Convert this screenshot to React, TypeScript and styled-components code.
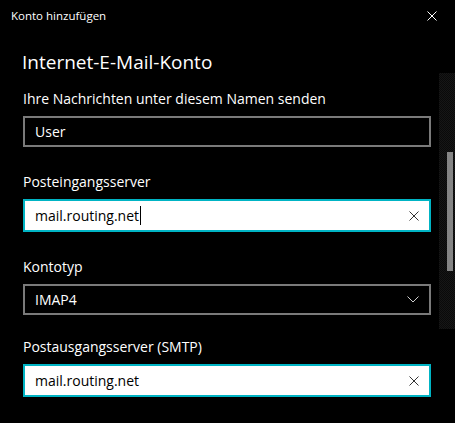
import React from "react";
import styled, { createGlobalStyle } from "styled-components";

const GlobalStyle = createGlobalStyle`
  html, body {
    margin: 0;
    padding: 0;
    background: #000;
  }
  body {
    font-family: "Segoe UI", "Open Sans", "Noto Sans", sans-serif;
    color: #fff;
  }
`;

const Window = styled.div`
  width: 455px;
  height: 423px;
  background: #000;
  display: flex;
  flex-direction: column;
  overflow: hidden;
`;

const TitleBar = styled.div`
  height: 31px;
  display: flex;
  align-items: center;
  justify-content: space-between;
  padding-left: 11px;
  flex-shrink: 0;
`;

const TitleText = styled.div`
  font-size: 11.5px;
  color: #fff;
`;

const CloseButton = styled.div`
  width: 46px;
  height: 31px;
  display: flex;
  align-items: center;
  justify-content: center;
`;

const Body = styled.div`
  flex: 1;
  display: flex;
`;

const Content = styled.div`
  flex: 1;
  padding: 18px 8px 0 23px;
  display: flex;
  flex-direction: column;
`;

const Heading = styled.div`
  font-size: 19px;
  line-height: 26px;
  margin-left: -1px;
  margin-bottom: 14px;
`;

const Field = styled.div<{ $gap?: number }>`
  display: flex;
  flex-direction: column;
  margin-bottom: ${(p) => p.$gap ?? 25}px;
`;

const Label = styled.div`
  font-size: 14px;
  line-height: 20px;
  margin-bottom: 7px;
`;

const Box = styled.div<{ $focused?: boolean }>`
  height: ${(p) => (p.$focused ? 33 : 31)}px;
  box-sizing: border-box;
  border: 2px solid ${(p) => (p.$focused ? "#00b4c4" : "#7a7a7a")};
  background: ${(p) => (p.$focused ? "#fff" : "#000")};
  color: ${(p) => (p.$focused ? "#000" : "#fff")};
  display: flex;
  align-items: center;
  padding: 0 10px 0 10px;
  font-size: 14px;
`;

const Value = styled.div`
  flex: 1;
  display: flex;
  align-items: center;
`;

const Caret = styled.span`
  display: inline-block;
  width: 1px;
  height: 19px;
  background: #000;
  margin-left: 1px;
`;

const Scrollbar = styled.div`
  width: 16px;
  margin-top: 42px;
  height: 256px;
  background-color: #111;
  background-image: repeating-conic-gradient(#161616 0 25%, #0a0a0a 0 50%);
  background-size: 2px 2px;
  display: flex;
  justify-content: flex-end;
  padding-right: 2px;
  box-sizing: border-box;
`;

const Thumb = styled.div`
  width: 6px;
  height: 119px;
  margin-top: 79px;
  background: #858585;
`;

const XIcon = ({ color, size }: { color: string; size: number }) => (
  <svg width={size} height={size} viewBox="0 0 10 10">
    <path d="M0.5 0.5 L9.5 9.5 M9.5 0.5 L0.5 9.5" stroke={color} strokeWidth="1" />
  </svg>
);

const Chevron = () => (
  <svg width="12" height="7" viewBox="0 0 12 7">
    <path d="M0.5 0.5 L6 6 L11.5 0.5" stroke="#cfcfcf" strokeWidth="1" fill="none" />
  </svg>
);

export default function App() {
  return (
    <Window>
      <GlobalStyle />
      <TitleBar>
        <TitleText>Konto hinzufügen</TitleText>
        <CloseButton>
          <XIcon color="#fff" size={10} />
        </CloseButton>
      </TitleBar>
      <Body>
        <Content>
          <Heading>Internet-E-Mail-Konto</Heading>
          <Field>
            <Label>Ihre Nachrichten unter diesem Namen senden</Label>
            <Box>
              <Value>User</Value>
            </Box>
          </Field>
          <Field>
            <Label>Posteingangsserver</Label>
            <Box $focused>
              <Value>
                mail.routing.net
                <Caret />
              </Value>
              <XIcon color="#333" size={10} />
            </Box>
          </Field>
          <Field $gap={22}>
            <Label>Kontotyp</Label>
            <Box>
              <Value>IMAP4</Value>
              <Chevron />
            </Box>
          </Field>
          <Field>
            <Label>Postausgangsserver (SMTP)</Label>
            <Box $focused>
              <Value>mail.routing.net</Value>
              <XIcon color="#333" size={10} />
            </Box>
          </Field>
        </Content>
        <Scrollbar>
          <Thumb />
        </Scrollbar>
      </Body>
    </Window>
  );
}
